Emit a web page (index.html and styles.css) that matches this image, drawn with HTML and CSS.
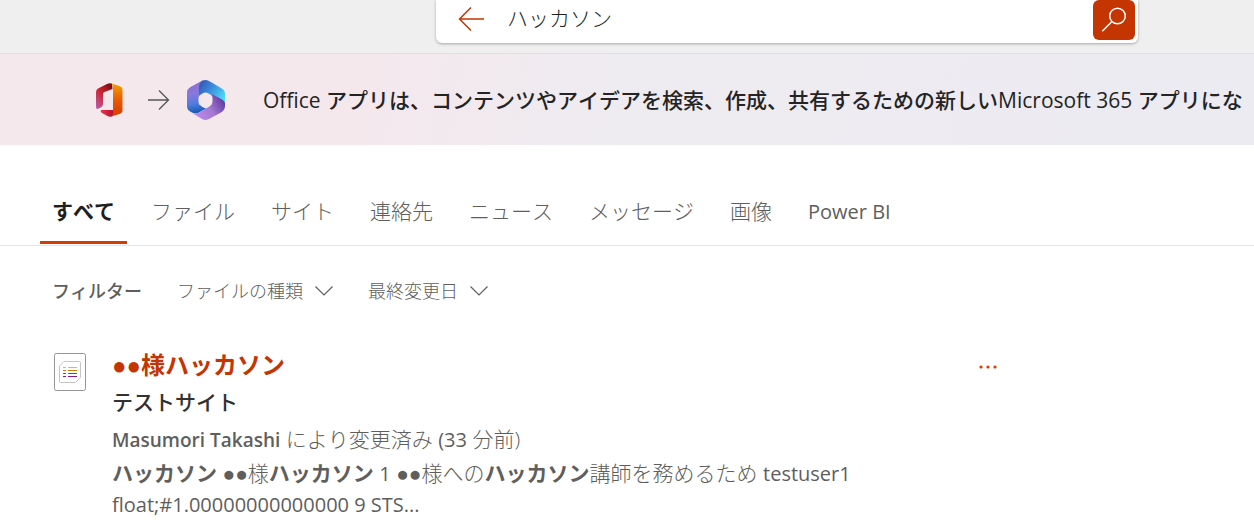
FILE: index.html
```html
<!DOCTYPE html>
<html lang="ja">
<head>
    <meta charset="UTF-8">
    <meta name="viewport" content="width=device-width, initial-scale=1.0">
    <title>ハッカソン - 検索</title>
    <link rel="stylesheet" href="styles.css">
</head>
<body>
    <header class="header">
        <form class="search-box">
            <button class="back-button" type="button" aria-label="戻る">
                <svg width="28" height="26" viewBox="0 0 28 26" fill="none" stroke="#c43501" stroke-width="1.5">
                    <path d="M26 13H1.500M13 1.500L1.500 13 13 24.500"/>
                </svg>
            </button>
            <input class="search-input" type="text" value="ハッカソン" aria-label="検索">
            <button class="search-button" type="submit" aria-label="検索">
                <svg width="26" height="26" viewBox="0 0 26 26" fill="none" stroke="#fff" stroke-width="1.5">
                    <circle cx="16.500" cy="9" r="7.800"/>
                    <path d="M11 14.500L1.200 24.300"/>
                </svg>
            </button>
        </form>
    </header>

    <div class="banner">
        <svg class="office-logo" width="28" height="36" viewBox="0 0 28 36" aria-hidden="true">
            <defs>
                <linearGradient id="office-left" x1="0.8" y1="0" x2="0.1" y2="1">
                    <stop offset="0" stop-color="#7d0b10"/>
                    <stop offset="0.45" stop-color="#c9242c"/>
                    <stop offset="1" stop-color="#c05aa5"/>
                </linearGradient>
                <linearGradient id="office-right" x1="0" y1="0" x2="0" y2="1">
                    <stop offset="0" stop-color="#f5a400"/>
                    <stop offset="0.5" stop-color="#e85a00"/>
                    <stop offset="1" stop-color="#d83b01"/>
                </linearGradient>
                <linearGradient id="office-bottom" x1="0" y1="0" x2="1" y2="0">
                    <stop offset="0" stop-color="#f0304c"/>
                    <stop offset="1" stop-color="#b3122f"/>
                </linearGradient>
            </defs>
            <path d="M17 1.500Q14.500 0.700 12 2L3 6.500Q1 7.500 1 10V25Q1 28 4.200 26.200L6.500 25Q8 24 8 22V12Q8 10.500 9.500 10L17.500 7z" fill="url(#office-left)"/>
            <path d="M6.500 28H18V34Q15 35.300 12.500 34L7 31Q4.500 29 6.500 28z" fill="url(#office-bottom)"/>
            <path d="M15 1L24.500 3.900Q27.500 5 27.500 8V28Q27.500 31 24.500 32L16 34.600Q18 33.500 18 31V5Q18 2 15 1z" fill="url(#office-right)"/>
        </svg>
        <svg class="banner-arrow" width="22" height="22" viewBox="0 0 22 22" fill="none" stroke="#555" stroke-width="1.300" aria-hidden="true">
            <path d="M0 11H20.500M11 1.500L20.500 11 11 20.500"/>
        </svg>
        <svg class="m365-logo" width="40" height="42" viewBox="0 0 40 42" aria-hidden="true">
            <defs>
                <linearGradient id="m365-left" x1="0.5" y1="0" x2="0.6" y2="1">
                    <stop offset="0" stop-color="#8f6ed0"/>
                    <stop offset="0.4" stop-color="#8878dc"/>
                    <stop offset="0.7" stop-color="#4f7ce0"/>
                    <stop offset="1" stop-color="#0f57ad"/>
                </linearGradient>
                <linearGradient id="m365-top" x1="0" y1="0.2" x2="1" y2="0.8">
                    <stop offset="0" stop-color="#3559b5"/>
                    <stop offset="0.4" stop-color="#398bdc"/>
                    <stop offset="1" stop-color="#4be3fa"/>
                </linearGradient>
                <linearGradient id="m365-bottom" x1="0" y1="0.7" x2="1" y2="0.2">
                    <stop offset="0" stop-color="#bd8bed"/>
                    <stop offset="0.5" stop-color="#a477d2"/>
                    <stop offset="1" stop-color="#57349b"/>
                </linearGradient>
            </defs>
            <path d="M19 1C15 2 13 5 13 9V25L20 29.500 13 33.500C10 35 7.500 34.500 5 33C2 31.500 1 29.500 1 27V14C1 11 2 9.500 4.500 8L16 1.700z" fill="url(#m365-left)"/>
            <path d="M13 17V8C13 2.500 18 -0.500 23 2L35 9C38 10.500 39 12 39 15V25L25 19z" fill="url(#m365-top)"/>
            <path d="M39 23V27C39 30 37.500 32 35 33.500L23 40C20 41.500 18 41 16 40L6 34C9 35 11 34.500 14 33L23 27.500C25.500 26 26 24 26 22V15L35 20C37 21 38.500 22 39 24z" fill="url(#m365-bottom)"/>
            <path d="M19.500 13.500Q21 13.500 22.500 14.500L25 16Q26.500 17 26.500 19V22.500Q26.500 25 24.500 26.500L22.500 28Q19.500 30 16.500 28L14 26Q12.500 25 12.500 22.500V19Q12.500 17 14 16L16.500 14.500Q18 13.500 19.500 13.500z" fill="#f4e8ec"/>
        </svg>
        <p class="banner-text">Office アプリは、コンテンツやアイデアを検索、作成、共有するための新しいMicrosoft 365 アプリにな</p>
    </div>

    <nav class="tabs">
        <a class="tab active" href="#">すべて</a>
        <a class="tab" href="#">ファイル</a>
        <a class="tab" href="#">サイト</a>
        <a class="tab" href="#">連絡先</a>
        <a class="tab" href="#">ニュース</a>
        <a class="tab" href="#">メッセージ</a>
        <a class="tab" href="#">画像</a>
        <a class="tab" href="#"><span class="latin">Power BI</span></a>
    </nav>

    <main class="content">
        <div class="filters">
            <span class="filters-label">フィルター</span>
            <button class="filter" type="button">ファイルの種類
                <svg width="18" height="10" viewBox="0 0 18 10" fill="none" stroke="#605e5c" stroke-width="1.200"><path d="M0.500 0.500L9 9l8.500-8.500"/></svg>
            </button>
            <button class="filter" type="button">最終変更日
                <svg width="18" height="10" viewBox="0 0 18 10" fill="none" stroke="#605e5c" stroke-width="1.200"><path d="M0.500 0.500L9 9l8.500-8.500"/></svg>
            </button>
        </div>

        <article class="result">
            <svg class="result-icon" width="32" height="38" viewBox="0 0 32 38" fill="none" aria-hidden="true">
                <rect x="0.500" y="0.500" width="31" height="37" rx="2" fill="#fff" stroke="#979593"/>
                <path d="M10 8.500H25.500Q26.500 8.500 26.500 9.500V24.500L21.500 29.500H6.500Q5.500 29.500 5.500 28.500V13z" stroke="#c8c6c4"/>
                <path d="M9 14.500h3M14 14.500h9" stroke="#f5b915"/>
                <path d="M9 17.500h3M14 17.500h9" stroke="#e07b00"/>
                <path d="M9 20.500h3M14 20.500h9" stroke="#c43501"/>
                <path d="M9 23.500h3M14 23.500h9" stroke="#881798"/>
            </svg>
            <div class="result-body">
                <h2 class="result-title"><a href="#">●●様ハッカソン</a></h2>
                <p class="result-site">テストサイト</p>
                <p class="result-meta"><b class="author">Masumori Takashi</b> により変更済み <span class="latin">(33</span> 分前)</p>
                <p class="result-summary"><b>ハッカソン</b> ●●様<b>ハッカソン</b> <span class="latin">1</span> ●●様への<b>ハッカソン</b>講師を務めるため <span class="latin">testuser1</span> <span class="latin">float;#1.00000000000000 9 STS...</span></p>
            </div>
            <button class="more-button" type="button" aria-label="その他">
                <svg width="18" height="4" viewBox="0 0 18 4" fill="#d83b01">
                    <circle cx="2" cy="2" r="1.600"/>
                    <circle cx="9" cy="2" r="1.600"/>
                    <circle cx="16" cy="2" r="1.600"/>
                </svg>
            </button>
        </article>
    </main>
</body>
</html>
```
FILE: styles.css
```css
* { margin: 0; padding: 0; box-sizing: border-box; }
body {
    background-color: #fff;
    color: #605e5c;
    font-family: "Open Sans", "Liberation Sans", "Noto Sans CJK JP", sans-serif;
    font-size: 21px;
    font-weight: 300;
    font-kerning: none;
    line-height: 30px;
    overflow-x: hidden;
}
a { color: inherit; text-decoration: none; }
button { background: none; border: none; font: inherit; color: inherit; cursor: pointer; }
svg { display: block; flex-shrink: 0; }
b { font-weight: 600; }
.latin { font-size: 20px; font-weight: 400; }

.header {
    display: flex;
    height: 54px;
    padding: 0 116px 0 436px;
    background-color: #efefef;
    border-bottom: 1px solid #e1dfe2;
}
.search-box {
    flex: 1;
    display: flex;
    align-items: flex-start;
    height: 43px;
    padding-right: 3px;
    background-color: #fff;
    border-radius: 0 0 6px 6px;
    box-shadow: 0 1px 3px rgba(0, 0, 0, 0.3);
}
.back-button {
    padding: 6px 21px 6px 22px;
}
.search-input {
    flex: 1;
    min-width: 0;
    height: 34px;
    border: none;
    outline: none;
    background: none;
    color: #201f1e;
    font: inherit;
    font-kerning: none;
}
.search-button {
    display: flex;
    justify-content: center;
    align-items: center;
    width: 42px;
    height: 40px;
    background-color: #c43501;
    border-radius: 6px;
}

.banner {
    display: flex;
    align-items: center;
    height: 91px;
    padding-left: 95px;
    background: linear-gradient(100deg, #f5e8ec 0%, #f4e8ed 30%, #efebf0 45%, #ecebf2 100%);
    color: #242424;
    overflow: hidden;
}
.banner-arrow { margin: 0 16px 0 25px; }
.banner-text {
    margin-left: 37px;
    font-weight: 500;
    white-space: nowrap;
}

.tabs {
    display: flex;
    gap: 12px;
    padding: 37px 40px 1px;
    border-bottom: 1px solid #e5e5e5;
}
.tab {
    padding: 14px 12px 14px;
    border-bottom: 3px solid transparent;
}
.tab.active {
    color: #201f1e;
    font-weight: 700;
    border-bottom-color: #d83b01;
}

.content { padding: 30px 52px; }
.filters {
    display: flex;
    align-items: center;
    gap: 35px;
    font-size: 18px;
}
.filters-label { font-weight: 500; }
.filter {
    display: flex;
    align-items: center;
    gap: 12px;
}

.result {
    display: flex;
    align-items: flex-start;
    max-width: 947px;
    padding-top: 41px;
}
.result-icon { margin: 6px 26px 0 2px; }
.result-body {
    flex: 1;
    padding-right: 90px;
}
.result-title {
    color: #c43501;
    font-size: 24px;
    font-weight: 600;
    line-height: 36px;
}
.result-site {
    color: #323130;
    font-weight: 500;
    line-height: 38px;
}
.result-meta { line-height: 36px; }
.author { font-size: 19px; }
.more-button { padding: 18px 2px; }
```
